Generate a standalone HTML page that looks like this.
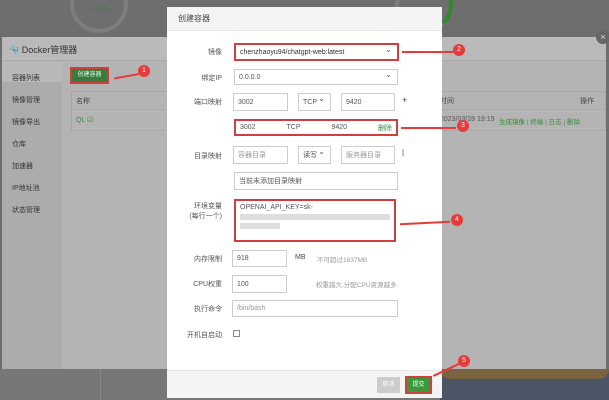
<!DOCTYPE html>
<html><head><meta charset="utf-8"><style>
*{margin:0;padding:0;box-sizing:border-box}
body{width:609px;height:400px;overflow:hidden;position:relative;background:#6e6e6e;font-family:"Liberation Sans","Noto Sans CJK SC",sans-serif;font-size:8px;color:#444}
.a{position:absolute}
.circ{border-radius:50%;border:4px solid #7d7d7d}
.inp{position:absolute;background:#fff;border:1px solid #ccc;font-size:7px;color:#555;padding:0 4px;display:flex;align-items:center}
.lbl{position:absolute;font-size:7px;color:#555;text-align:right;width:60px}
.red{border:2px solid #d43d3d}
.dot{position:absolute;width:12px;height:12px;border-radius:50%;background:#e53b3b;color:#fff;font-size:7px;text-align:center;line-height:12px}
.arr{position:absolute;height:2px;background:#e53b3b}
.g{color:#3a8a3a}
.sel:after{content:"⌄";position:absolute;right:5px;top:0px;font-size:8px;color:#555}
</style></head><body>
<div class="a circ" style="left:70px;top:-25px;width:58px;height:58px"></div>
<div class="a" style="left:88px;top:4px;color:#4b7a4b;font-size:9px">0.5%</div>
<div class="a circ" style="left:395px;top:-25px;width:58px;height:58px;border-right-color:#2f8a2f"></div>
<!-- bottom -->
<div class="a" style="left:0;top:369px;width:609px;height:31px;background:#777"></div>
<div class="a" style="left:440px;top:369px;width:169px;height:31px;background:#4a5566"></div>
<div class="a" style="left:440px;top:369px;width:169px;height:10px;background:#7a6440;border-radius:0 0 60px 60px"></div>
<div class="a" style="left:100px;top:369px;width:1px;height:31px;background:#888"></div>
<!-- docker panel -->
<div class="a" style="left:2px;top:37px;width:604px;height:332px;background:#b4b4b4"></div>
<div class="a" style="left:2px;top:37px;width:604px;height:24px;background:#bababa;border-bottom:1px solid #aaa"></div>
<div class="a" style="left:8px;top:43px;font-size:9px;color:#333"><span style="color:#3a6f9a">🐳</span> Docker管理器</div>
<div class="a" style="left:2px;top:62px;width:60px;height:307px;background:#acacac"></div>
<div class="a" style="left:2px;top:62px;width:60px;height:20px;background:#b8b8b8"></div>
<div class="a" style="left:12px;top:68px;font-size:7px;color:#333;line-height:22px">容器列表<br>镜像管理<br>镜像导出<br>仓库<br>加速器<br>IP地址池<br>状态管理</div>
<div class="a red" style="left:70px;top:67px;width:39px;height:17px;background:#3a7a3a;color:#dfe;font-size:6px;text-align:center;line-height:13px">创建容器</div>
<div class="a" style="left:71px;top:91px;width:535px;height:40px;border:1px solid #a8a8a8"></div>
<div class="a" style="left:71px;top:109px;width:535px;height:1px;background:#a8a8a8"></div>
<div class="a" style="left:76px;top:96px;font-size:7px">名称</div>
<div class="a g" style="left:76px;top:116px;font-size:7px">QL ☑</div>
<div class="a" style="left:440px;top:96px;font-size:7px">时间</div>
<div class="a" style="left:580px;top:96px;font-size:7px">操作</div>
<div class="a" style="left:440px;top:116px;font-size:7px;color:#555">2023/03/28 19:19</div>
<div class="a g" style="left:499px;top:116px;font-size:6.5px">生成镜像 <span style="color:#777">|</span> 终端 <span style="color:#777">|</span> 日志 <span style="color:#777">|</span> 删除</div>
<div class="a" style="left:596px;top:30px;width:14px;height:14px;border-radius:50%;background:#666;color:#ddd;font-size:9px;text-align:center;line-height:14px">×</div>
<!-- modal -->
<div class="a" style="left:167px;top:7px;width:275px;height:391px;background:#fff"></div>
<div class="a" style="left:167px;top:7px;width:275px;height:24px;background:#f4f4f4;border-bottom:1px solid #e6e6e6"></div>
<div class="a" style="left:178px;top:13px;font-size:8px;color:#444">创建容器</div>
<div class="lbl" style="left:162px;top:47px">镜像</div>
<div class="inp red sel" style="left:234px;top:43px;width:165px;height:18px;color:#333">chenzhaoyu94/chatgpt-web:latest</div>
<div class="lbl" style="left:162px;top:73px">绑定IP</div>
<div class="inp sel" style="left:234px;top:69px;width:164px;height:16px">0.0.0.0</div>
<div class="lbl" style="left:162px;top:97px">端口映射</div>
<div class="inp" style="left:233px;top:93px;width:55px;height:18px">3002</div>
<div class="inp sel" style="left:298px;top:93px;width:33px;height:18px">TCP</div>
<div class="inp" style="left:341px;top:93px;width:54px;height:18px">9420</div>
<div class="a" style="left:402px;top:95px;font-size:9px">+</div>
<div class="inp red" style="left:234px;top:119px;width:164px;height:17px;justify-content:space-between"><span>3002</span><span>TCP</span><span>9420</span><span class="g">删除</span></div>
<div class="lbl" style="left:162px;top:151px">目录映射</div>
<div class="inp" style="left:233px;top:146px;width:55px;height:18px;color:#999">容器目录</div>
<div class="inp sel" style="left:298px;top:146px;width:33px;height:18px">读写</div>
<div class="inp" style="left:341px;top:146px;width:54px;height:18px;color:#999">服务器目录</div>
<div class="a" style="left:402px;top:148px;font-size:8px">|</div>
<div class="inp" style="left:234px;top:172px;width:164px;height:18px">当前未添加目录映射</div>
<div class="lbl" style="left:162px;top:201px">环境变量<br>(每行一个)</div>
<div class="inp red" style="left:234px;top:199px;width:162px;height:43px;align-items:flex-start;flex-direction:column;padding-top:3px">OPENAI_API_KEY=sk-<div style="width:150px;height:6px;background:#ddd;margin-top:3px"></div><div style="width:40px;height:6px;background:#ddd;margin-top:3px"></div></div>
<div class="lbl" style="left:162px;top:254px">内存限制</div>
<div class="inp" style="left:232px;top:250px;width:55px;height:17px">918</div>
<div class="a" style="left:295px;top:254px;font-size:7px">MB</div>
<div class="a" style="left:317px;top:254px;font-size:6.5px;color:#999">不可超过1837MB</div>
<div class="lbl" style="left:162px;top:279px">CPU权重</div>
<div class="inp" style="left:232px;top:275px;width:55px;height:18px">100</div>
<div class="a" style="left:316px;top:279px;font-size:6.5px;color:#999">权重越大,分配CPU资源越多</div>
<div class="lbl" style="left:162px;top:304px">执行命令</div>
<div class="inp" style="left:232px;top:300px;width:166px;height:17px;color:#999">/bin/bash</div>
<div class="lbl" style="left:162px;top:330px">开机自启动</div>
<div class="a" style="left:233px;top:330px;width:7px;height:7px;border:1px solid #888"></div>
<div class="a" style="left:167px;top:370px;width:275px;height:28px;background:#f4f4f4;border-top:1px solid #e6e6e6"></div>
<div class="a" style="left:377px;top:377px;width:23px;height:16px;background:#ccc;color:#fff;font-size:6px;text-align:center;line-height:16px">取消</div>
<div class="a red" style="left:405px;top:376px;width:27px;height:18px;background:#3a9a3a;color:#fff;font-size:6px;text-align:center;line-height:14px">提交</div>
<!-- annotations -->
<div class="arr" style="left:114px;top:75px;width:28px;transform:rotate(-10deg)"></div>
<div class="dot" style="left:138px;top:65px">1</div>
<div class="arr" style="left:402px;top:51px;width:54px"></div>
<div class="dot" style="left:453px;top:44px">2</div>
<div class="arr" style="left:401px;top:127px;width:55px"></div>
<div class="dot" style="left:457px;top:120px">3</div>
<div class="arr" style="left:400px;top:222px;width:50px;transform:rotate(-3deg)"></div>
<div class="dot" style="left:451px;top:214px">4</div>
<div class="arr" style="left:432px;top:369px;width:28px;transform:rotate(-25deg)"></div>
<div class="dot" style="left:458px;top:355px">5</div>
</body></html>
